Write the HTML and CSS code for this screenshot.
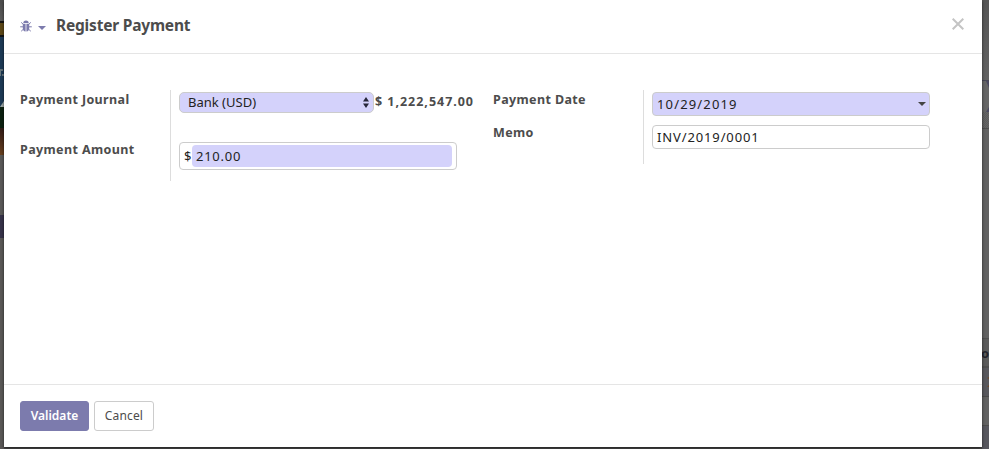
FILE: index.html
```html
<!DOCTYPE html>
<html lang="en">
<head>
<meta charset="utf-8">
<title>Register Payment</title>
<link rel="stylesheet" href="styles.css">
</head>
<body>
<div class="backdrop">
  <div class="edge edge-left">
    <i class="l-top"></i><i class="l-gold"></i>
    <i class="l-blue"><svg width="4" height="70" viewBox="0 0 4 70"><path d="M0 32h3v2H1v5H0zM2 37h2v2H2z" fill="#65747b"/><path d="M4 64v6H0z" fill="#a0aaa8"/></svg></i>
    <i class="l-green"></i><i class="l-brown"></i><i class="l-gray"></i><i class="l-purple"></i><i class="l-rest"></i>
  </div>
  <main class="modal">
    <header class="modal-header">
      <svg class="bug" width="12" height="13" viewBox="0 0 12 13"><path d="M3.3 3a2.7 2.6 0 0 1 5.4 0z" fill="#7c7bad"/><path d="M2.8 3.7h2.8v7.8C3.6 11.3 2.8 10 2.8 8zM6.4 3.7h2.8V8c0 2-.8 3.3-2.8 3.5z" fill="#7c7bad"/><path d="M1.2 2.4l2 1.9M10.8 2.4l-2 1.9M.2 6.8h3M11.8 6.8h-3M1.2 11.2l2.2-2M10.8 11.2l-2.2-2" fill="none" stroke="#7c7bad" stroke-width="1"/></svg>
      <span class="caret debug-caret"></span>
      <h4 class="title">Register Payment</h4>
      <svg class="close" width="12" height="12" viewBox="0 0 12 12"><path d="M.7.7l10.6 10.6M11.3.7L.7 11.3" stroke="#c4c4c4" stroke-width="2"/></svg>
    </header>
    <section class="modal-body">
      <div class="group group-left">
        <div class="labels"><label>Payment Journal</label><label>Payment Amount</label></div>
        <div class="fields">
          <div class="journal-row">
            <div class="select"><span class="bank">Bank (USD)</span><svg width="6" height="11" viewBox="0 0 6 11"><path d="M0 4.5L3 0l3 4.5zM0 6.5h6L3 11z" fill="#26263a"/></svg></div>
            <b class="balance">$&nbsp;1,222,547.00</b>
          </div>
          <div class="amount"><span class="currency">$</span><div class="amount-value"><span>210.00</span></div></div>
        </div>
      </div>
      <div class="group group-right">
        <div class="labels"><label>Payment Date</label><label>Memo</label></div>
        <div class="fields">
          <div class="input date"><span>10/29/2019</span><span class="caret date-caret"></span></div>
          <div class="input memo"><span>INV/2019/0001</span></div>
        </div>
      </div>
    </section>
    <footer class="modal-footer"><div class="button primary"><span>Validate</span></div><div class="button"><span>Cancel</span></div></footer>
  </main>
  <div class="edge edge-right">
    <i class="r-top"></i><i class="r-arrow"><svg width="7" height="31" viewBox="0 0 7 31"><path d="M4 0h3v7zM7 26v5H4z" fill="#4b4960"/></svg></i><i class="r-check"></i><i class="r-main"></i><i class="r-head">o</i><i class="r-row"><svg width="7" height="28" viewBox="0 0 7 28"><path d="M5 10l2-1v2zM5 19h2v-2z" fill="#6c4829"/></svg></i><i class="r-gap"></i><i class="r-bottom"></i>
  </div>
</div>
</body>
</html>
```
FILE: styles.css
```css
* { box-sizing: border-box; }
body { margin: 0; overflow: hidden; font-family: "Noto Sans", sans-serif; font-size: 13px; color: #4c4c4c; }
.backdrop { width: 989px; height: 449px; display: flex; align-items: flex-start; background: #494949; }
.edge { height: 449px; display: flex; flex-direction: column; overflow: hidden; }
.edge i { display: block; flex: none; font-style: normal; }
.edge svg { display: block; }
.edge-left { width: 4px; }
.l-top { height: 21px; background: linear-gradient(#4d4d4d, #5b5b5b); }
.l-gold { height: 16px; background: #5c4818; border: solid #151515; border-width: 2px 0; }
.l-blue { height: 70px; background: #1d3a56; }
.l-green { height: 21px; background: #0c2110; }
.l-brown { height: 27px; background: linear-gradient(#321c17, #68401f); }
.l-gray { height: 60px; background: #5a5958; }
.l-purple { height: 23px; background: #37334a; }
.l-rest { height: 211px; background: #5a5857; }
.edge-right { width: 7px; }
.r-top { height: 80px; background: linear-gradient(#555, #626262); }
.r-arrow { height: 32px; background: #666; border-top: 1px solid #494856; }
.r-check { height: 17px; background: repeating-conic-gradient(#5c5c5c 0 25%, #666 0 50%) 0 0 / 2px 2px; border-bottom: 1px solid #4d4d4d; }
.r-main { height: 209px; background: #626262; }
.r-head { height: 30px; background: #5b5b5b; border: solid #505050; border-width: 1px 0 2px; font-weight: 700; line-height: 29px; color: #24242b; text-indent: -1px; }
.r-row { height: 29px; background: #58585d; border-bottom: 1px solid #4b4b4b; }
.r-gap { height: 29px; background: #626262; border-bottom: 1px solid #4d4d4d; }
.r-bottom { height: 23px; background: #57575e; }
.modal { width: 978px; height: 447px; display: flex; flex-direction: column; background: #fff; box-shadow: 0 1px 3px #0009; z-index: 1; }
.modal span, .modal b, .modal label, .title { white-space: nowrap; }
.modal-header { height: 54px; display: flex; align-items: flex-start; padding-left: 16px; border-bottom: 1px solid #e5e5e5; }
.bug { margin-top: 20px; }
.caret { border: 4px solid transparent; border-top-color: #7c7bad; border-bottom: 0; }
.debug-caret { margin: 26px 0 0 6px; }
.title { margin: 14px auto 0 10px; font-size: 15.5px; line-height: 22px; font-weight: 700; letter-spacing: -.2px; }
.close { margin: 18px 18px 0 0; }
.modal-body { height: 330px; display: flex; align-items: flex-start; padding: 36px 16px 0; }
.group { width: 473px; display: flex; }
.labels { width: 151px; display: flex; flex-direction: column; border-right: 1px solid #ddd; font-weight: 700; font-size: 12.5px; line-height: 18px; letter-spacing: .38px; padding-top: 1px; }
.group-left .labels { height: 91px; gap: 32px; }
.group-right .labels { height: 74px; gap: 15px; }
.fields { padding: 2px 0 0 8px; }
.journal-row { display: flex; }
.select { width: 195px; height: 21px; padding: 0 4px 0 8px; display: flex; align-items: center; justify-content: space-between; background: #d4d2fb; border: 1px solid #ccc; border-radius: 5px; color: #222; }
.bank { margin-top: -2px; }
.balance { margin-left: 1px; line-height: 19px; font-size: 12.5px; letter-spacing: .97px; }
.amount { width: 278px; height: 28px; margin-top: 29px; padding: 2px 4px; display: flex; align-items: center; border: 1px solid #ccc; border-radius: 4px; color: #222; }
.currency { width: 8px; }
.amount-value { width: 260px; height: 22px; padding-left: 4px; line-height: 22px; background: #d4d2fb; border-radius: 4px; letter-spacing: .75px; }
.input { width: 278px; height: 24px; padding: 0 4px; display: flex; align-items: center; justify-content: space-between; border: 1px solid #ccc; border-radius: 4px; color: #222; }
.date { background: #d4d2fb; letter-spacing: 1.15px; padding-right: 3px; }
.memo { margin-top: 9px; letter-spacing: .87px; }
.date-caret { border-top-color: #444; }
.modal-footer { height: 63px; display: flex; gap: 5px; padding: 16px; border-top: 1px solid #e5e5e5; }
.button { width: 60px; height: 30px; padding-bottom: 1px; display: flex; align-items: center; justify-content: center; border: 1px solid #ccc; border-radius: 3px; font-size: 12px; letter-spacing: .15px; }
.primary { width: 69px; background: #7c7bad; border-color: #7c7bad; color: #fff; font-weight: 600; letter-spacing: 0; }
```
